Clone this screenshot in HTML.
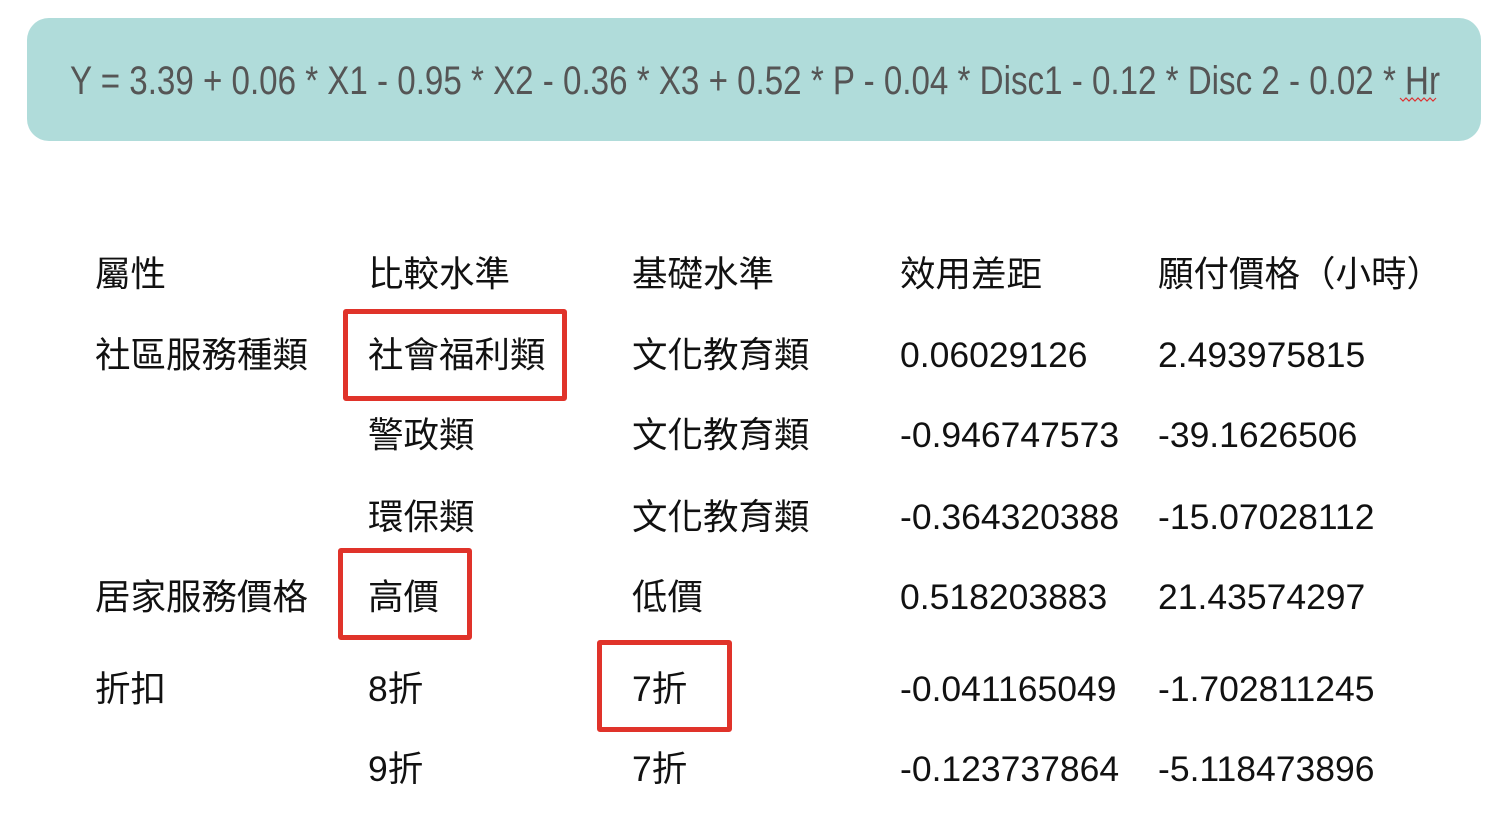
<!DOCTYPE html>
<html><head><meta charset="utf-8"><style>
body{margin:0;width:1506px;height:838px;background:#fff;position:relative;overflow:hidden;font-family:"Liberation Sans","Noto Sans CJK TC",sans-serif;}
.banner{position:absolute;left:27px;top:18px;width:1454px;height:123px;background:#b0dcda;border-radius:22px;}
.t{position:absolute;font-size:35.5px;line-height:40px;color:#111;white-space:nowrap;}
.box{position:absolute;border:5px solid #e0332a;border-radius:3px;box-sizing:border-box;}
</style></head><body>
<div class="banner"></div>
<svg style="position:absolute;left:0;top:0" width="1506" height="160">
<text x="70" y="94" font-family="Liberation Sans, sans-serif" font-size="40" fill="#555" textLength="1370" lengthAdjust="spacingAndGlyphs">Y = 3.39 + 0.06 * X1 - 0.95 * X2 - 0.36 * X3 + 0.52 * P - 0.04 * Disc1 - 0.12 * Disc 2 - 0.02 * Hr</text>
<path d="M1400 98 l3 3 l3 -3 l3 3 l3 -3 l3 3 l3 -3 l3 3 l3 -3 l3 3 l3 -3 l3 3 l3 -3" stroke="#d33" fill="none" stroke-width="1.2"/>
</svg>
<div class="t" style="left:95px;top:254px">屬性</div>
<div class="t" style="left:368px;top:254px">比較水準</div>
<div class="t" style="left:632px;top:254px">基礎水準</div>
<div class="t" style="left:900px;top:254px">效用差距</div>
<div class="t" style="left:1158px;top:254px">願付價格（小時）</div>

<div class="t" style="left:95px;top:335px">社區服務種類</div>
<div class="t" style="left:368px;top:335px">社會福利類</div>
<div class="t" style="left:632px;top:335px">文化教育類</div>
<div class="t" style="left:900px;top:335px">0.06029126</div>
<div class="t" style="left:1158px;top:335px">2.493975815</div>

<div class="t" style="left:368px;top:415px">警政類</div>
<div class="t" style="left:632px;top:415px">文化教育類</div>
<div class="t" style="left:900px;top:415px">-0.946747573</div>
<div class="t" style="left:1158px;top:415px">-39.1626506</div>

<div class="t" style="left:368px;top:497px">環保類</div>
<div class="t" style="left:632px;top:497px">文化教育類</div>
<div class="t" style="left:900px;top:497px">-0.364320388</div>
<div class="t" style="left:1158px;top:497px">-15.07028112</div>

<div class="t" style="left:95px;top:577px">居家服務價格</div>
<div class="t" style="left:368px;top:577px">高價</div>
<div class="t" style="left:632px;top:577px">低價</div>
<div class="t" style="left:900px;top:577px">0.518203883</div>
<div class="t" style="left:1158px;top:577px">21.43574297</div>

<div class="t" style="left:95px;top:669px">折扣</div>
<div class="t" style="left:368px;top:669px">8折</div>
<div class="t" style="left:632px;top:669px">7折</div>
<div class="t" style="left:900px;top:669px">-0.041165049</div>
<div class="t" style="left:1158px;top:669px">-1.702811245</div>

<div class="t" style="left:368px;top:749px">9折</div>
<div class="t" style="left:632px;top:749px">7折</div>
<div class="t" style="left:900px;top:749px">-0.123737864</div>
<div class="t" style="left:1158px;top:749px">-5.118473896</div>

<div class="box" style="left:343px;top:309px;width:224px;height:92px"></div>
<div class="box" style="left:338px;top:548px;width:134px;height:92px"></div>
<div class="box" style="left:597px;top:640px;width:135px;height:92px"></div>
</body></html>
